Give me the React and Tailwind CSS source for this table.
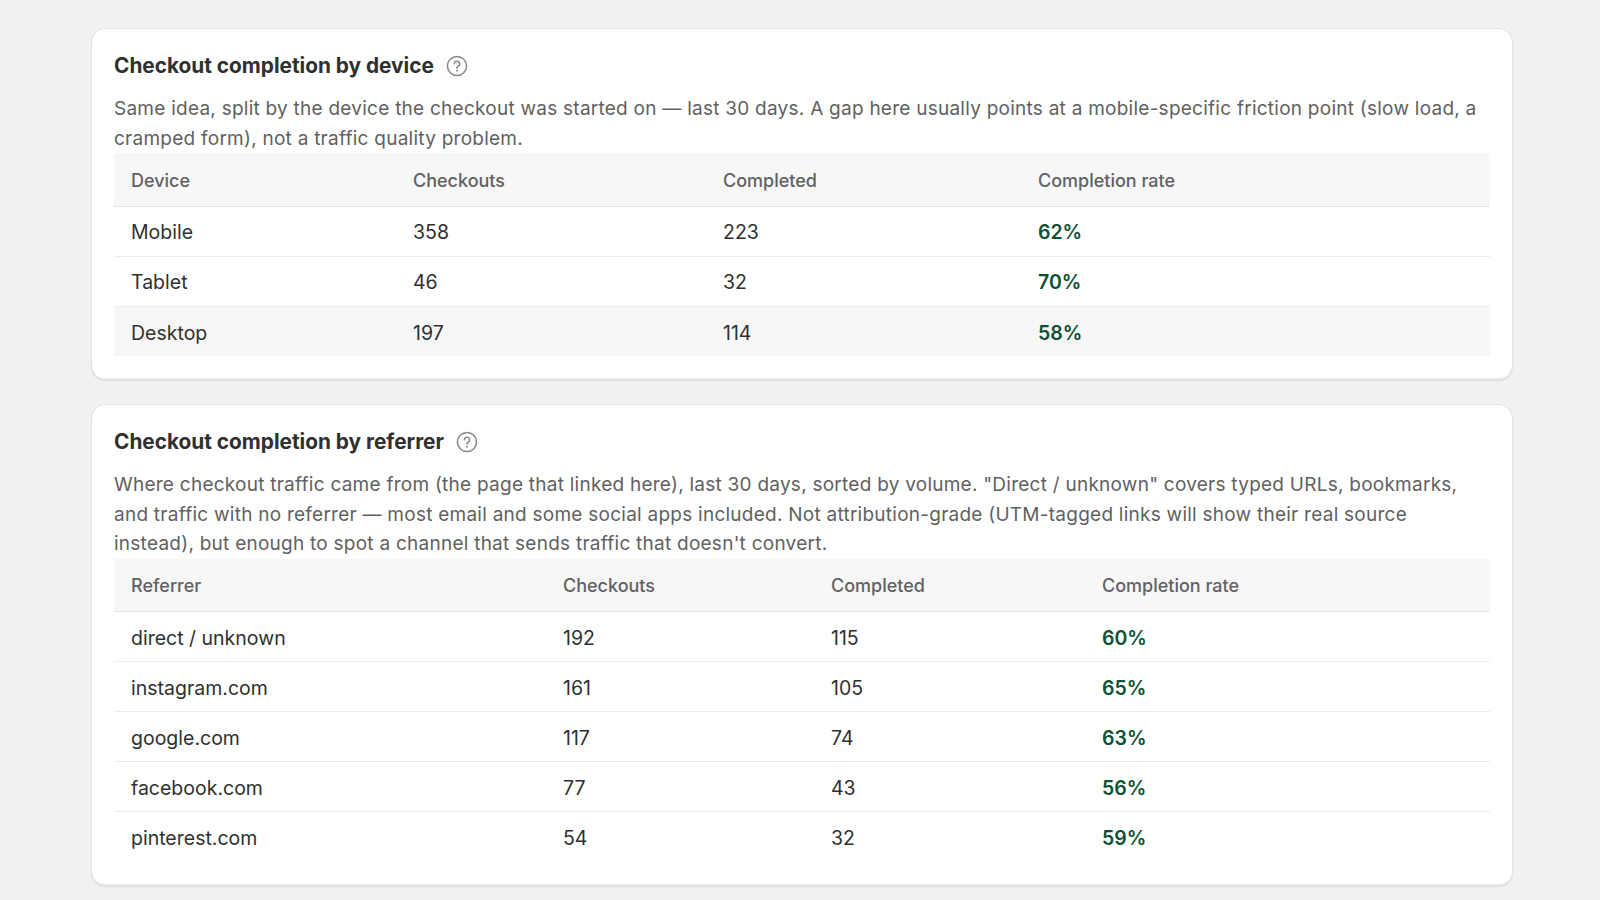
import React from "react";

const deviceRows = [
    { name: "Mobile", checkouts: 358, completed: 223, rate: "62%" },
    { name: "Tablet", checkouts: 46, completed: 32, rate: "70%" },
    { name: "Desktop", checkouts: 197, completed: 114, rate: "58%", hovered: true },
];

const referrerRows = [
    { name: "direct / unknown", checkouts: 192, completed: 115, rate: "60%" },
    { name: "instagram.com", checkouts: 161, completed: 105, rate: "65%" },
    { name: "google.com", checkouts: 117, completed: 74, rate: "63%" },
    { name: "facebook.com", checkouts: 77, completed: 43, rate: "56%" },
    { name: "pinterest.com", checkouts: 54, completed: 32, rate: "59%" },
];

function HelpIcon() {
    return (
        <svg width="22" height="22" viewBox="0 0 20 20" fill="none" className="text-[#8a8a8a] shrink-0">
            <circle cx="10" cy="10" r="8.7" stroke="currentColor" strokeWidth="1.4" />
            <path
                d="M7.6 8a2.4 2.4 0 1 1 3.4 2.2c-.6.3-1 .8-1 1.4v.4"
                stroke="currentColor"
                strokeWidth="1.4"
                strokeLinecap="round"
            />
            <circle cx="10" cy="14.4" r="0.9" fill="currentColor" />
        </svg>
    );
}

function Card({ title, children }) {
    return (
        <section className="bg-white rounded-[14px] border border-[#e3e3e3] shadow-[0_1px_1px_rgba(0,0,0,0.08),inset_0_-1px_0_rgba(0,0,0,0.08)] px-[22px] pt-[23px] pb-[23px]">
            <div className="flex items-center gap-[12px] h-[28px]">
                <h2 className="text-[20.8px] font-bold text-[#303030] leading-[28px]">{title}</h2>
                <HelpIcon />
            </div>
            {children}
        </section>
    );
}

function DataTable({ first, widths, rows }) {
    return (
        <table className="w-full border-collapse table-fixed text-[19.5px] font-normal text-[#303030]">
            <colgroup>
                <col className={widths[0]} />
                <col className={widths[1]} />
                <col className={widths[2]} />
                <col />
            </colgroup>
            <thead>
                <tr className="bg-[#f7f7f7] border-b border-[#e3e3e3] h-[53px]">
                    <th className="text-left font-medium text-[#616161] text-[18px] px-[17px] pt-[2px]">{first}</th>
                    <th className="text-left font-medium text-[#616161] text-[18px] px-[17px] pt-[2px]">Checkouts</th>
                    <th className="text-left font-medium text-[#616161] text-[18px] px-[17px] pt-[2px]">Completed</th>
                    <th className="text-left font-medium text-[#616161] text-[18px] px-[17px] pt-[2px]">Completion rate</th>
                </tr>
            </thead>
            <tbody>
                {rows.map((r, i) => (
                    <tr
                        key={r.name}
                        className={
                            (i < rows.length - 1 ? "border-b border-[#ebebeb] " : "") +
                            (r.hovered ? "bg-[#f7f7f7] " : "") +
                            "h-[50px]"
                        }
                    >
                        <td className="px-[17px] pt-[4px]">{r.name}</td>
                        <td className="px-[17px] pt-[4px]">{r.checkouts}</td>
                        <td className="px-[17px] pt-[4px]">{r.completed}</td>
                        <td className="px-[17px] pt-[4px] font-semibold text-[#0c5132]">{r.rate}</td>
                    </tr>
                ))}
            </tbody>
        </table>
    );
}

export default function App() {
    return (
        <div
            className="min-h-screen bg-[#f1f1f1] pt-[28px] pb-10"
            style={{ fontFamily: "Inter, 'Noto Sans', sans-serif" }}
        >
            <div className="ml-[91px] w-[1422px] flex flex-col gap-[24px]">
                {/* Device */}
                <Card title="Checkout completion by device">
                    <p className="mt-[14px] text-[19px] tracking-[0.25px] leading-[29.5px] text-[#616161]">
                        Same idea, split by the device the checkout was started on — last 30 days. A gap here usually
                        points at a mobile-specific friction point (slow load, a cramped form), not a traffic quality
                        problem.
                    </p>
                    <DataTable
                        first="Device"
                        widths={["w-[282px]", "w-[310px]", "w-[315px]"]}
                        rows={deviceRows}
                    />
                </Card>

                {/* Referrer */}
                <Card title="Checkout completion by referrer">
                    <p className="mt-[14px] text-[19px] tracking-[0.25px] leading-[29.5px] text-[#616161]">
                        Where checkout traffic came from (the page that linked here), last 30 days, sorted by volume.
                        "Direct / unknown" covers typed URLs, bookmarks, and traffic with no referrer — most email and
                        some social apps included. Not attribution-grade (UTM-tagged links will show their real source
                        instead), but enough to spot a channel that sends traffic that doesn't convert.
                    </p>
                    <DataTable
                        first="Referrer"
                        widths={["w-[432px]", "w-[268px]", "w-[271px]"]}
                        rows={referrerRows}
                    />
                </Card>
            </div>
        </div>
    );
}
